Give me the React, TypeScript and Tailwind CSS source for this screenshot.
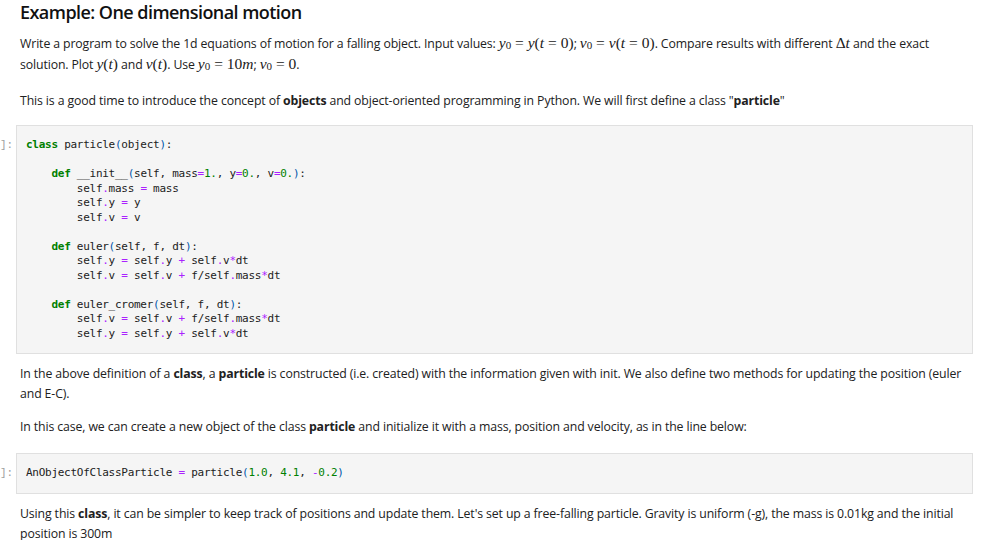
import React from "react";

const CODE1 = `class particle(object):

    def __init__(self, mass=1., y=0., v=0.):
        self.mass = mass
        self.y = y
        self.v = v

    def euler(self, f, dt):
        self.y = self.y + self.v*dt
        self.v = self.v + f/self.mass*dt

    def euler_cromer(self, f, dt):
        self.v = self.v + f/self.mass*dt
        self.y = self.y + self.v*dt`;

const CODE2 = `AnObjectOfClassParticle = particle(1.0, 4.1, -0.2)`;

function highlight(src: string) {
  const re = /(\b(?:class|def)\b)|(\d+\.?\d*)|([=+*\-.])|([()])|([A-Za-z_]\w*)|(\s+)|(.)/g;
  const out: React.ReactNode[] = [];
  let m: RegExpExecArray | null;
  let i = 0;
  while ((m = re.exec(src)) !== null) {
    const t = m[0];
    let cls = "text-[#212121]";
    if (m[1]) cls = "text-[#008000] font-bold";
    else if (m[2]) cls = "text-[#008000]";
    else if (m[3]) cls = "text-[#aa22ff]";
    else if (m[4]) cls = "text-[#0055aa]";
    out.push(
      <span key={i++} className={cls}>
        {t}
      </span>
    );
  }
  return out;
}

function CodeCell({ code }: { code: string }) {
  return (
    <div className="flex">
      <div className="w-4 shrink-0 overflow-hidden pr-[5px] text-right pt-[13px] font-['Liberation_Mono',monospace] text-[11px] leading-[14.5px] text-[#9e9e9e]">
        <span className="whitespace-nowrap">]:</span>
      </div>
      <div className="flex-1 mr-[10px] border border-[#e0e0e0] bg-[#f5f5f5] px-[9px] py-[12px]">
        <pre className="font-['DejaVu_Sans_Mono',monospace] text-[11px] tracking-[-0.27px] leading-[14.5px] whitespace-pre">
          {highlight(code)}
        </pre>
      </div>
    </div>
  );
}

// inline math pieces, MathJax-ish
function Mi({ children }: { children: React.ReactNode }) {
  return <i className="font-['Liberation_Serif',serif] text-[15.5px] tracking-normal">{children}</i>;
}

function Mr({ children }: { children: React.ReactNode }) {
  return <span className="font-['Liberation_Serif',serif] text-[15.5px] tracking-normal">{children}</span>;
}

function Eq() {
  return <span className="font-['Liberation_Serif',serif] text-[15.5px] px-[4px]">=</span>;
}

function Sub({ children }: { children: React.ReactNode }) {
  return <sub className="font-['Liberation_Serif',serif] text-[11px] relative top-[1px]">{children}</sub>;
}

export default function App() {
  return (
    <div className="w-[983px] h-[540px] overflow-hidden bg-white font-['Open_Sans',sans-serif] text-[12.3px] leading-[20px] tracking-[-0.12px] text-[#212121]">
      <div className="pl-5 pr-5">
        <h2 className="pt-[1px] text-[18px] leading-[22px] tracking-[-0.55px] font-semibold text-[#111]">
          Example: One dimensional motion
        </h2>
        <p className="mt-[10px]">
          Write a program to solve the 1d equations of motion for a falling object. Input values:{" "}
          <Mi>y</Mi>
          <Sub>0</Sub>
          <Eq />
          <Mi>y</Mi>
          <Mr>(</Mr>
          <Mi>t</Mi>
          <Eq />
          <Mr>0)</Mr>; <Mi>v</Mi>
          <Sub>0</Sub>
          <Eq />
          <Mi>v</Mi>
          <Mr>(</Mr>
          <Mi>t</Mi>
          <Eq />
          <Mr>0)</Mr>. Compare results with different <Mr>Δ</Mr>
          <Mi>t</Mi> and the exact solution. Plot <Mi>y</Mi>
          <Mr>(</Mr>
          <Mi>t</Mi>
          <Mr>)</Mr> and <Mi>v</Mi>
          <Mr>(</Mr>
          <Mi>t</Mi>
          <Mr>)</Mr>. Use <Mi>y</Mi>
          <Sub>0</Sub>
          <Eq />
          <Mr>10</Mr>
          <Mi>m</Mi>; <Mi>v</Mi>
          <Sub>0</Sub>
          <Eq />
          <Mr>0</Mr>.
        </p>
        <p className="mt-[16px]">
          This is a good time to introduce the concept of <b>objects</b> and object-oriented programming in Python. We
          will first define a class "<b>particle</b>"
        </p>
      </div>

      <div className="mt-[14px]">
        <CodeCell code={CODE1} />
      </div>

      <div className="pl-5 pr-5">
        <p className="mt-[10px]">
          In the above definition of a <b>class</b>, a <b>particle</b> is constructed (i.e. created) with the information
          given with init. We also define two methods for updating the position (euler and E-C).
        </p>
        <p className="mt-[13px]">
          In this case, we can create a new object of the class <b>particle</b> and initialize it with a mass, position
          and velocity, as in the line below:
        </p>
      </div>

      <div className="mt-[16px]">
        <CodeCell code={CODE2} />
      </div>

      <div className="pl-5 pr-5">
        <p className="mt-[10px]">
          Using this <b>class</b>, it can be simpler to keep track of positions and update them. Let's set up a
          free-falling particle. Gravity is uniform (-g), the mass is 0.01kg and the initial position is 300m
        </p>
      </div>
    </div>
  );
}
